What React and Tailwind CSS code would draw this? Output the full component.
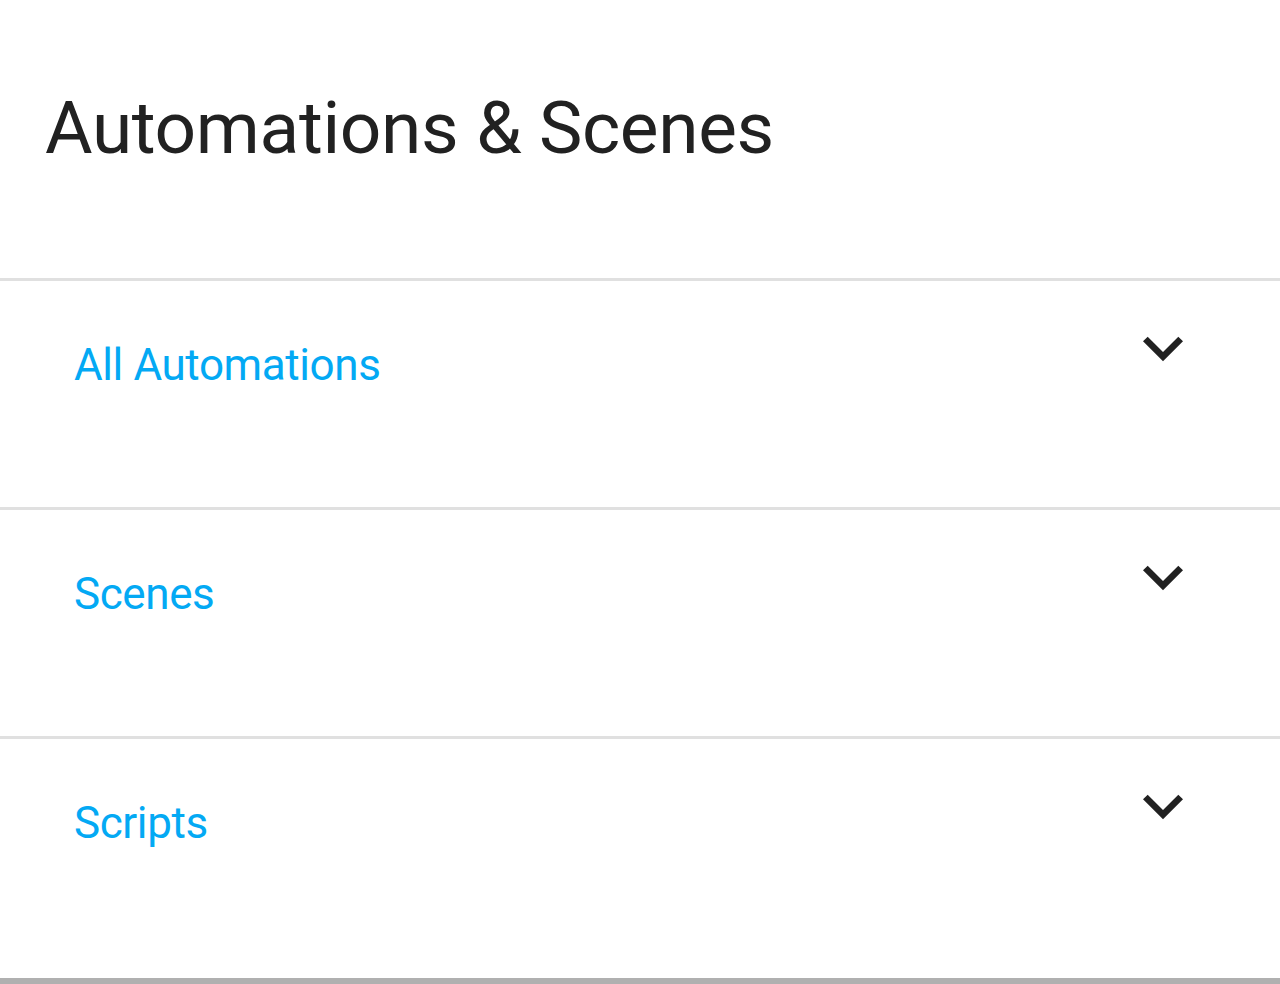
const ITEMS = ['All Automations', 'Scenes', 'Scripts']

function ExpandMore() {
  return (
    <svg viewBox="0 0 24 24" className="w-[80px] h-[80px]" fill="#212121">
      <path d="M16.59 8.59 12 13.17 7.41 8.59 6 10l6 6 6-6z" />
    </svg>
  )
}

export default function App() {
  return (
    <div className="w-[1280px] h-[984px] bg-white overflow-hidden flex flex-col" style={{ fontFamily: 'Roboto, "Noto Sans", sans-serif' }}>
      {/* cabecera */}
      <div className="h-[278px] shrink-0 pl-[45px] pt-[92px]">
        <h1 className="text-[73px] leading-none font-normal text-[#212121] tracking-[-0.35px]">
          Automations &amp; Scenes
        </h1>
      </div>

      {ITEMS.map((label, i) => (
        <div
          key={label}
          className={`border-t-[3px] border-[#e0e0e0] flex justify-between shrink-0 ${i === ITEMS.length - 1 ? 'h-[242px]' : 'h-[229px]'}`}
        >
          <span className="pl-[74px] pt-[62px] text-[44px] leading-none tracking-[-0.4px] text-[#03a9f4]">{label}</span>
          <div className="pr-[77px] pt-[27px]">
            <ExpandMore />
          </div>
        </div>
      ))}

      <div className="h-[6px] shrink-0 bg-[#b0b0b0]" />
    </div>
  )
}
